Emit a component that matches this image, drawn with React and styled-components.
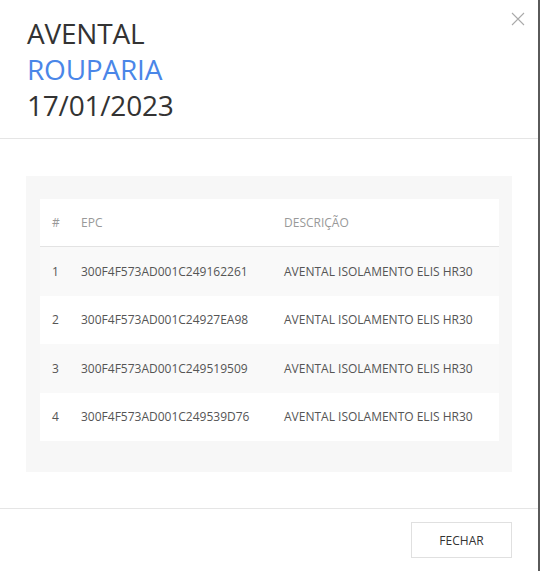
import React from "react";
import styled, { createGlobalStyle } from "styled-components";

const GlobalStyle = createGlobalStyle`
  html, body {
    margin: 0;
    padding: 0;
    background: #fff;
  }
  body {
    font-family: "Open Sans", "Noto Sans", Arial, sans-serif;
  }
`;

const Frame = styled.div`
  display: flex;
  width: 540px;
  height: 571px;
  overflow: hidden;
`;

const Modal = styled.div`
  flex: 1;
  display: flex;
  flex-direction: column;
  background: #fff;
`;

const Edge = styled.div`
  width: 2px;
  background: #5a5a5a;
`;

const Header = styled.div`
  position: relative;
  padding: 15px 27px 15px;
  border-bottom: 1px solid #e5e5e5;
`;

const Title = styled.div`
  font-size: 28px;
  line-height: 36px;
  color: ${(p) => p.color || "#333"};
  letter-spacing: -0.2px;
`;

const Close = styled.button`
  position: absolute;
  top: 11px;
  right: 12px;
  width: 16px;
  height: 16px;
  padding: 0;
  border: 0;
  background: none;
  cursor: pointer;
`;

const Body = styled.div`
  padding: 37px 26px 36px;
`;

const Panel = styled.div`
  background: #f7f7f7;
  padding: 23px 13px 31px 14px;
`;

const Table = styled.table`
  width: 100%;
  border-collapse: collapse;
  background: #fff;
  font-size: 12px;
`;

const Th = styled.th`
  text-align: left;
  font-weight: 400;
  color: #999;
  height: 47px;
  padding: 0 0 0 ${(p) => p.$pl || 0}px;
  border-bottom: 1px solid #e3e3e3;
`;

const Tr = styled.tr`
  background: ${(p) => (p.$odd ? "#f9f9f9" : "#fff")};
  & + & td {
    border-top: 1px solid #e3e3e3;
  }
`;

const Td = styled.td`
  height: 48.5px;
  padding: 0 0 0 ${(p) => p.$pl || 0}px;
  color: #555;
  white-space: nowrap;
`;

const Footer = styled.div`
  margin-top: auto;
  display: flex;
  justify-content: flex-end;
  padding: 13px 26px 13px;
  border-top: 1px solid #e5e5e5;
`;

const Button = styled.button`
  width: 101px;
  height: 36px;
  background: #fff;
  border: 1px solid #e0e0e0;
  font-family: inherit;
  font-size: 12px;
  color: #333;
  cursor: pointer;
`;

const rows = [
  ["1", "300F4F573AD001C249162261", "AVENTAL ISOLAMENTO ELIS HR30"],
  ["2", "300F4F573AD001C24927EA98", "AVENTAL ISOLAMENTO ELIS HR30"],
  ["3", "300F4F573AD001C249519509", "AVENTAL ISOLAMENTO ELIS HR30"],
  ["4", "300F4F573AD001C249539D76", "AVENTAL ISOLAMENTO ELIS HR30"],
];

export default function App() {
  return (
    <>
      <GlobalStyle />
      <Frame>
        <Modal>
          <Header>
            <Title>AVENTAL</Title>
            <Title color="#4a86e8">ROUPARIA</Title>
            <Title>17/01/2023</Title>
            <Close aria-label="Fechar">
              <svg width="16" height="16" viewBox="0 0 16 16">
                <path d="M2 2L14 14M14 2L2 14" stroke="#aaa" strokeWidth="1.1" />
              </svg>
            </Close>
          </Header>
          <Body>
            <Panel>
              <Table>
                <thead>
                  <tr>
                    <Th $pl={12} style={{ width: 17 }}>#</Th>
                    <Th $pl={12} style={{ width: 191 }}>EPC</Th>
                    <Th $pl={12}>DESCRIÇÃO</Th>
                  </tr>
                </thead>
                <tbody>
                  {rows.map((r, i) => (
                    <Tr key={r[0]} $odd={i % 2 === 0}>
                      <Td $pl={12}>{r[0]}</Td>
                      <Td $pl={12}>{r[1]}</Td>
                      <Td $pl={12}>{r[2]}</Td>
                    </Tr>
                  ))}
                </tbody>
              </Table>
            </Panel>
          </Body>
          <Footer>
            <Button>FECHAR</Button>
          </Footer>
        </Modal>
        <Edge />
      </Frame>
    </>
  );
}
